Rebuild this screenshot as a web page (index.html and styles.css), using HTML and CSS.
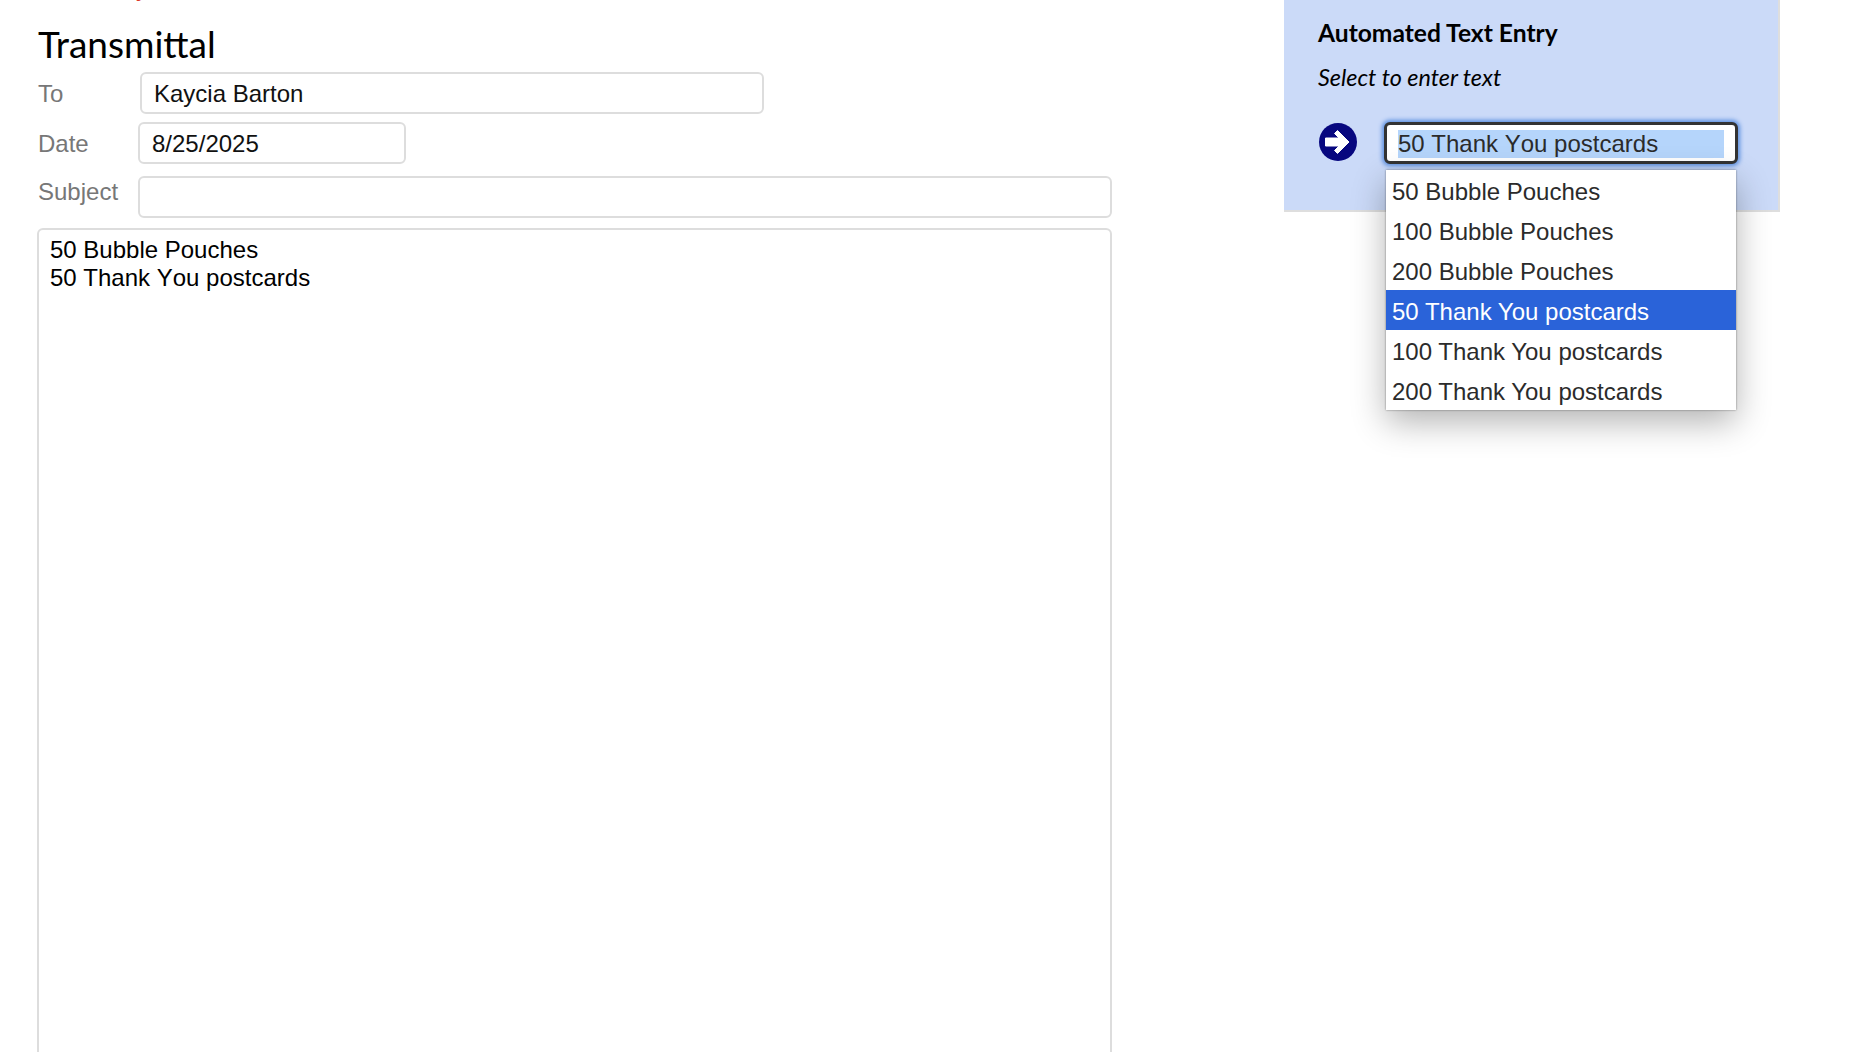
FILE: index.html
```html
<!DOCTYPE html>
<html lang="en">
<head>
<meta charset="utf-8">
<title>Transmittal</title>
<link rel="stylesheet" href="styles.css">
</head>
<body>
<div class="cut-mark">y</div>
<main class="page">
  <section class="form">
    <h1 class="title">Transmittal</h1>
    <div class="row row-to">
      <span class="label">To</span>
      <div class="field field-to">Kaycia Barton</div>
    </div>
    <div class="row row-date">
      <span class="label">Date</span>
      <div class="field field-date">8/25/2025</div>
    </div>
    <div class="row row-subject">
      <span class="label">Subject</span>
      <div class="field field-subject"></div>
    </div>
    <div class="body-text">50 Bubble Pouches<br>50 Thank You postcards</div>
  </section>
  <aside class="panel">
    <h2 class="panel-title">Automated Text Entry</h2>
    <p class="panel-hint">Select to enter text</p>
    <div class="picker">
      <svg class="go" width="38" height="38" viewBox="0 0 38 38" aria-hidden="true">
        <circle cx="19" cy="19" r="19" fill="#07077f"/>
        <path d="M6.500 15H20L15.500 10.500L18.500 7.500L30 19L18.500 30.500L15.500 27.500L20 23H6.500Z" fill="#fff" stroke="#fff" stroke-width="1" stroke-linejoin="round"/>
      </svg>
      <div class="combo">
        <div class="combo-input"><span class="combo-sel">50 Thank You postcards</span></div>
        <ul class="menu">
          <li class="opt">50 Bubble Pouches</li>
          <li class="opt">100 Bubble Pouches</li>
          <li class="opt">200 Bubble Pouches</li>
          <li class="opt opt-active">50 Thank You postcards</li>
          <li class="opt">100 Thank You postcards</li>
          <li class="opt">200 Thank You postcards</li>
        </ul>
      </div>
    </div>
  </aside>
</main>
</body>
</html>
```

FILE: styles.css
```css
html, body { margin: 0; padding: 0; height: 100%; overflow: hidden; background: #fff; }
body { font-family: "Liberation Sans", Arial, sans-serif; color: #000; position: relative; }
.cut-mark { position: absolute; left: 136px; top: -25px; font: 24px/26px "Liberation Sans", sans-serif; color: #dc3a2c; }
.page { display: flex; align-items: flex-start; height: 1052px; }
.form { margin-left: 37px; flex: none; width: 1075px; display: flex; flex-direction: column; }
.title { font: 400 37px/44px Lato, sans-serif; margin: 22px 0 0; height: 50px; padding-left: 1px; }
.row { display: flex; align-items: center; height: 42px; }
.label { box-sizing: border-box; width: 101px; padding-left: 1px; margin-top: 2px; flex: none; font-size: 24px; color: #777; }
.field { box-sizing: border-box; border: 2px solid #ddd; border-radius: 6px; background: #fff; font-size: 24px; line-height: 28px; padding: 6px 12px 4px; color: #111; height: 42px; margin-top: 0; }
.row-to .field { margin-left: 2px; width: 624px; }
.row-date { margin-top: 8px; }
.row-date .field { width: 268px; }
.row-subject { margin-top: 12px; align-items: flex-start; }
.field-subject { flex: 1; }
.body-text { box-sizing: border-box; height: 860px; margin-top: 10px; border: 2px solid #ddd; border-radius: 6px; padding: 6px 11px; font-size: 24px; line-height: 28px; font-kerning: none; }
.panel { box-sizing: border-box; margin-left: 172px; width: 496px; height: 212px; background: #cbdaf8; padding: 18px 32px 0 34px; border-right: 2px solid #dedede; border-bottom: 2px solid #dedede; flex: none; }
.panel-title { font: 700 24.600px/30px Lato, sans-serif; margin: 0; }
.panel-hint { font: italic 400 23.400px/30px Lato, sans-serif; margin: 14px 0 0; }
.picker { display: flex; align-items: flex-start; margin-top: 30px; margin-left: 1px; }
.go { flex: none; margin-top: 1px; }
.combo { position: relative; margin-left: 27px; }
.combo-input { box-sizing: border-box; width: 354px; height: 42px; border: 3px solid #333; border-radius: 6px; background: #fff; box-shadow: 0 0 4px 2px #5b8fe0; padding: 5px 11px; font-size: 24px; line-height: 27px; color: #2b2b2b; font-kerning: none; }
.combo-sel { display: block; width: 326px; height: 28px; background: #b5d5fb; }
.menu { position: absolute; left: 2px; top: 48px; width: 350px; list-style: none; margin: 0; padding: 0; background: #fff; box-shadow: 0 0 2px rgba(0,0,0,.45), 0 12px 32px rgba(0,0,0,.3); }
.opt { height: 40px; line-height: 43px; padding-left: 6px; font-size: 24px; color: #2b2b2b; }
.opt-active { background: #2a63d9; color: #fff; }
```
